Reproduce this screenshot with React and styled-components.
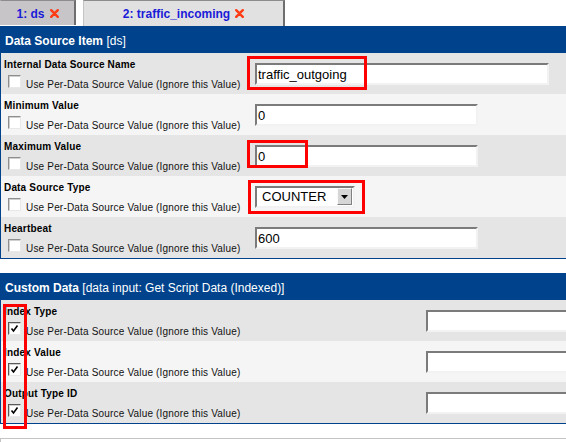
import React from "react";
import styled, { createGlobalStyle } from "styled-components";

const Global = createGlobalStyle`
  html, body { margin: 0; padding: 0; background: #fff; overflow: hidden; }
  body { font-family: "Liberation Sans", Arial, sans-serif; color: #000; }
`;

const Page = styled.div`
  position: relative;
  width: 566px;
  height: 442px;
  overflow: hidden;
`;

const TabBar = styled.div`
  display: flex;
  align-items: flex-start;
  gap: 7px;
  height: 26px;
`;

const Tab = styled.div`
  box-sizing: border-box;
  width: ${(p) => p.$w}px;
  height: ${(p) => (p.$active ? 26 : 25)}px;
  background: ${(p) => (p.$active ? "#e1e1e1" : "#c7c5c7")};
  border-top: 1px solid #8c8c8c;
  border-left: 1px solid ${(p) => (p.$active ? "#c4c4c4" : "#c7c5c7")};
  border-right: 2px solid #6e6e6e;
  display: flex;
  align-items: flex-start;
  justify-content: center;
  gap: 5px;
  padding-top: 6px;
  font-size: 12px;
  line-height: 14px;
  font-weight: bold;
  color: #1b1bd8;
`;

const CloseIcon = styled.svg`
  width: 9px;
  height: 9px;
  margin-top: 2px;
`;

const Table = styled.section`
  box-sizing: border-box;
  width: 600px;
  border: 1px solid #00438c;
  margin-top: ${(p) => p.$mt || 0}px;
  position: relative;
`;

const Header = styled.div`
  height: 26px;
  box-sizing: border-box;
  background: #00438c;
  color: #fff;
  font-size: 12px;
  line-height: 24px;
  padding: 2px 0 0 4px;
  white-space: nowrap;
`;

const HeaderTitle = styled.b`
  font-weight: bold;
`;

const Row = styled.div`
  display: grid;
  grid-template-columns: ${(p) => p.$labelW}px 1fr;
  height: 41px;
  background: ${(p) => (p.$alt ? "#f5f5f5" : "#e5e5e5")};
`;

const LabelCell = styled.div`
  padding: 6px 0 0 3px;
  display: flex;
  flex-direction: column;
  gap: 4px;
`;

const Label = styled.div`
  font-size: 10px;
  line-height: 12px;
  font-weight: bold;
  letter-spacing: 0.17px;
  white-space: nowrap;
`;

const CheckLine = styled.label`
  display: flex;
  align-items: flex-end;
  gap: 5px;
  padding-left: 4px;
`;

const Box = styled.span`
  box-sizing: border-box;
  width: 13px;
  height: 13px;
  flex: none;
  background: #fff;
  border-top: 1px solid ${(p) => (p.$checked ? "#5a5a5a" : "#8e8e8e")};
  border-left: 1px solid ${(p) => (p.$checked ? "#5a5a5a" : "#8e8e8e")};
  border-right: 1px solid #e8e8e8;
  border-bottom: 1px solid #e8e8e8;
  box-shadow: inset 1px 1px 0 #cfcfcf;
  display: flex;
  align-items: center;
  justify-content: center;
`;

const CheckText = styled.span`
  font-size: 10px;
  line-height: 10px;
  letter-spacing: 0.18px;
  margin-bottom: -2px;
  white-space: nowrap;
  color: #111;
`;

const FieldCell = styled.div`
  display: flex;
  align-items: center;
  padding-left: 4px;
`;

const TextInput = styled.input`
  box-sizing: border-box;
  width: ${(p) => p.$w}px;
  height: 22px;
  margin: 0;
  padding: 2px 0 0 1px;
  border: 2px solid;
  border-color: #7b7b7b #f2f2f2 #f2f2f2 #7b7b7b;
  background: #fff;
  font-family: "Liberation Sans", Arial, sans-serif;
  font-size: 13px;
  color: #000;
  outline: none;
`;

const SelectBox = styled.div`
  box-sizing: border-box;
  width: 100px;
  height: 22px;
  border: 2px solid;
  border-color: #7b7b7b #f2f2f2 #f2f2f2 #7b7b7b;
  background: #fff;
  display: flex;
  align-items: center;
  justify-content: space-between;
  padding: 0 1px 0 5px;
  font-size: 13px;
`;

const SelectButton = styled.span`
  box-sizing: border-box;
  width: 15px;
  height: 17px;
  background: #d6d6d6;
  border: 1px solid;
  border-color: #fafafa #808080 #808080 #fafafa;
  display: flex;
  align-items: center;
  justify-content: center;
`;

const NextBox = styled.div`
  margin-top: 14px;
  height: 30px;
  border: 1px solid #c4c4c4;
  width: 600px;
`;

const Annot = styled.div`
  position: absolute;
  box-sizing: border-box;
  left: ${(p) => p.$x}px;
  top: ${(p) => p.$y}px;
  width: ${(p) => p.$w}px;
  height: ${(p) => p.$h}px;
  border: 3px solid #ff0000;
  pointer-events: none;
`;

const X = () => (
  <CloseIcon viewBox="0 0 9 9">
    <path d="M1.2 1.2 L7.8 7.8 M7.8 1.2 L1.2 7.8" stroke="#ff3c14" strokeWidth="2.4" strokeLinecap="round" />
  </CloseIcon>
);

const Check = ({ checked }) => (
  <Box $checked={checked}>
    {checked && (
      <svg width="9" height="9" viewBox="0 0 9 9">
        <path d="M1.5 4.5 L3.5 7 L7.5 1.5" stroke="#000" strokeWidth="1.6" fill="none" />
      </svg>
    )}
  </Box>
);

const PER_DS = "Use Per-Data Source Value (Ignore this Value)";

const FieldRow = ({ label, labelW, alt, checked, children }) => (
  <Row $labelW={labelW} $alt={alt}>
    <LabelCell>
      <Label>{label}</Label>
      <CheckLine>
        <Check checked={checked} />
        <CheckText>{PER_DS}</CheckText>
      </CheckLine>
    </LabelCell>
    <FieldCell>{children}</FieldCell>
  </Row>
);

export default function App() {
  return (
    <Page>
      <Global />
      <TabBar>
        <Tab $w={76}>
          <span>1: ds</span>
          <X />
        </Tab>
        <Tab $w={202} $active>
          <span>2: traffic_incoming</span>
          <X />
        </Tab>
      </TabBar>

      <Table>
        <Header>
          <HeaderTitle>Data Source Item</HeaderTitle> [ds]
        </Header>
        <FieldRow label="Internal Data Source Name" labelW={250}>
          <TextInput $w={294} defaultValue="traffic_outgoing" />
        </FieldRow>
        <FieldRow label="Minimum Value" labelW={250} alt>
          <TextInput $w={223} defaultValue="0" />
        </FieldRow>
        <FieldRow label="Maximum Value" labelW={250}>
          <TextInput $w={223} defaultValue="0" />
        </FieldRow>
        <FieldRow label="Data Source Type" labelW={250} alt>
          <SelectBox>
            <span>COUNTER</span>
            <SelectButton>
              <svg width="7" height="4" viewBox="0 0 7 4">
                <path d="M0 0 H7 L3.5 4 Z" fill="#000" />
              </svg>
            </SelectButton>
          </SelectBox>
        </FieldRow>
        <FieldRow label="Heartbeat" labelW={250}>
          <TextInput $w={223} defaultValue="600" />
        </FieldRow>
      </Table>

      <Table $mt={14}>
        <Header>
          <HeaderTitle>Custom Data</HeaderTitle> [data input: Get Script Data (Indexed)]
        </Header>
        <FieldRow label="Index Type" labelW={421} checked>
          <TextInput $w={170} defaultValue="" />
        </FieldRow>
        <FieldRow label="Index Value" labelW={421} alt checked>
          <TextInput $w={170} defaultValue="" />
        </FieldRow>
        <FieldRow label="Output Type ID" labelW={421} checked>
          <TextInput $w={170} defaultValue="" />
        </FieldRow>
      </Table>

      <NextBox />

      <Annot $x={247} $y={56} $w={120} $h={34} />
      <Annot $x={247} $y={140} $w={61} $h={28} />
      <Annot $x={248} $y={180} $w={117} $h={34} />
      <Annot $x={3} $y={304} $w={24} $h={125} />
    </Page>
  );
}
